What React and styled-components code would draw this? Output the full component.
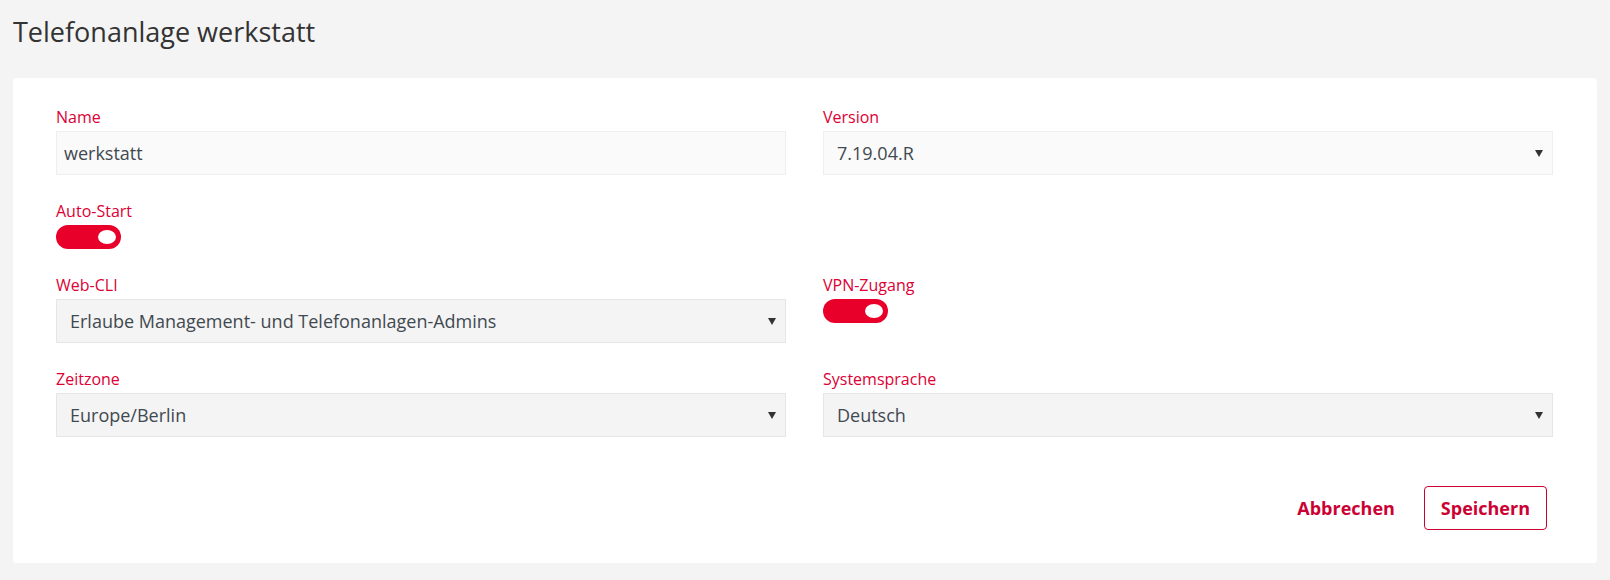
import React, { useState } from "react"
import styled, { createGlobalStyle } from "styled-components"

const GlobalStyle = createGlobalStyle`
  body {
    margin: 0;
    background: #f4f4f4;
    font-family: "Open Sans", "Liberation Sans", sans-serif;
  }
`

const RED = "#e8002b"

function Toggle({ on, onClick }) {
  return (
    <ToggleTrack $on={on} onClick={onClick}>
      <ToggleKnob $on={on} />
    </ToggleTrack>
  )
}

function Field({ label, children }) {
  return (
    <FieldWrap>
      <Label>{label}</Label>
      {children}
    </FieldWrap>
  )
}

function Select({ value, light }) {
  return (
    <SelectBox $light={light}>
      <span>{value}</span>
      <Arrow />
    </SelectBox>
  )
}

export default function App() {
  const [autoStart, setAutoStart] = useState(true)
  const [vpn, setVpn] = useState(true)
  return (
    <Page>
      <GlobalStyle />
      <Title>Telefonanlage werkstatt</Title>
      <Card>
        <FormGrid>
          <Field label="Name">
            <TextInput defaultValue="werkstatt" />
          </Field>
          <Field label="Version">
            <Select value="7.19.04.R" light />
          </Field>
          <Field label="Auto-Start">
            <Toggle on={autoStart} onClick={() => setAutoStart(!autoStart)} />
          </Field>
          <div />
          <Field label="Web-CLI">
            <Select value="Erlaube Management- und Telefonanlagen-Admins" />
          </Field>
          <Field label="VPN-Zugang">
            <Toggle on={vpn} onClick={() => setVpn(!vpn)} />
          </Field>
          <Field label="Zeitzone">
            <Select value="Europe/Berlin" />
          </Field>
          <Field label="Systemsprache">
            <Select value="Deutsch" />
          </Field>
        </FormGrid>
        <Actions>
          <Button>Abbrechen</Button>
          <Button $outlined>Speichern</Button>
        </Actions>
      </Card>
    </Page>
  )
}

/// styled components

const Page = styled.div`
  padding: 15px 13px 19px;
`

const Title = styled.h1`
  margin: 0 0 29px;
  font-size: 27px;
  line-height: 34px;
  font-weight: 400;
  color: #333;
`

const Card = styled.div`
  background: #fff;
  border-radius: 4px;
  padding: 28px 44px 33px 43px;
`

const FormGrid = styled.div`
  display: grid;
  grid-template-columns: 1fr 1fr;
  column-gap: 37px;
  row-gap: 25px;
`

const FieldWrap = styled.div`
  display: flex;
  flex-direction: column;
  align-items: flex-start;
`

const Label = styled.label`
  font-size: 16px;
  line-height: 22px;
  margin-bottom: 3px;
  color: #dc0035;
`

const controlBase = `
  box-sizing: border-box;
  width: 100%;
  height: 44px;
  font-family: "Open Sans", "Liberation Sans", sans-serif;
  font-size: 18px;
  color: #414950;
`

const TextInput = styled.input`
  ${controlBase}
  background: #fafafa;
  border: 1px solid #efefef;
  padding: 0 7px;
  outline: none;
`

const SelectBox = styled.div`
  ${controlBase}
  display: flex;
  align-items: center;
  justify-content: space-between;
  padding: 0 9px 0 13px;
  background: ${p => (p.$light ? "#fafafa" : "#f4f4f4")};
  border: 1px solid ${p => (p.$light ? "#efefef" : "#e6e6e6")};
`

const Arrow = styled.span`
  width: 0;
  height: 0;
  border-left: 4px solid transparent;
  border-right: 4px solid transparent;
  border-top: 7px solid #333;
`

const ToggleTrack = styled.div`
  position: relative;
  width: 65px;
  height: 24px;
  border-radius: 12px;
  background: ${p => (p.$on ? RED : "#ccc")};
  cursor: pointer;
`

const ToggleKnob = styled.span`
  position: absolute;
  top: 5px;
  ${p => (p.$on ? "right: 5px;" : "left: 5px;")}
  width: 18px;
  height: 14px;
  border-radius: 50%;
  background: #fff;
`

const Actions = styled.div`
  display: flex;
  justify-content: flex-end;
  gap: 12px;
  margin-top: 49px;
  padding-right: 6px;
`

const Button = styled.button`
  height: 44px;
  padding: 0 16px;
  border-radius: 4px;
  border: 1px solid ${p => (p.$outlined ? "#cc0033" : "transparent")};
  background: #fff;
  color: #cc0033;
  font-family: "Open Sans", "Liberation Sans", sans-serif;
  font-size: 18px;
  font-weight: 700;
  cursor: pointer;
`
